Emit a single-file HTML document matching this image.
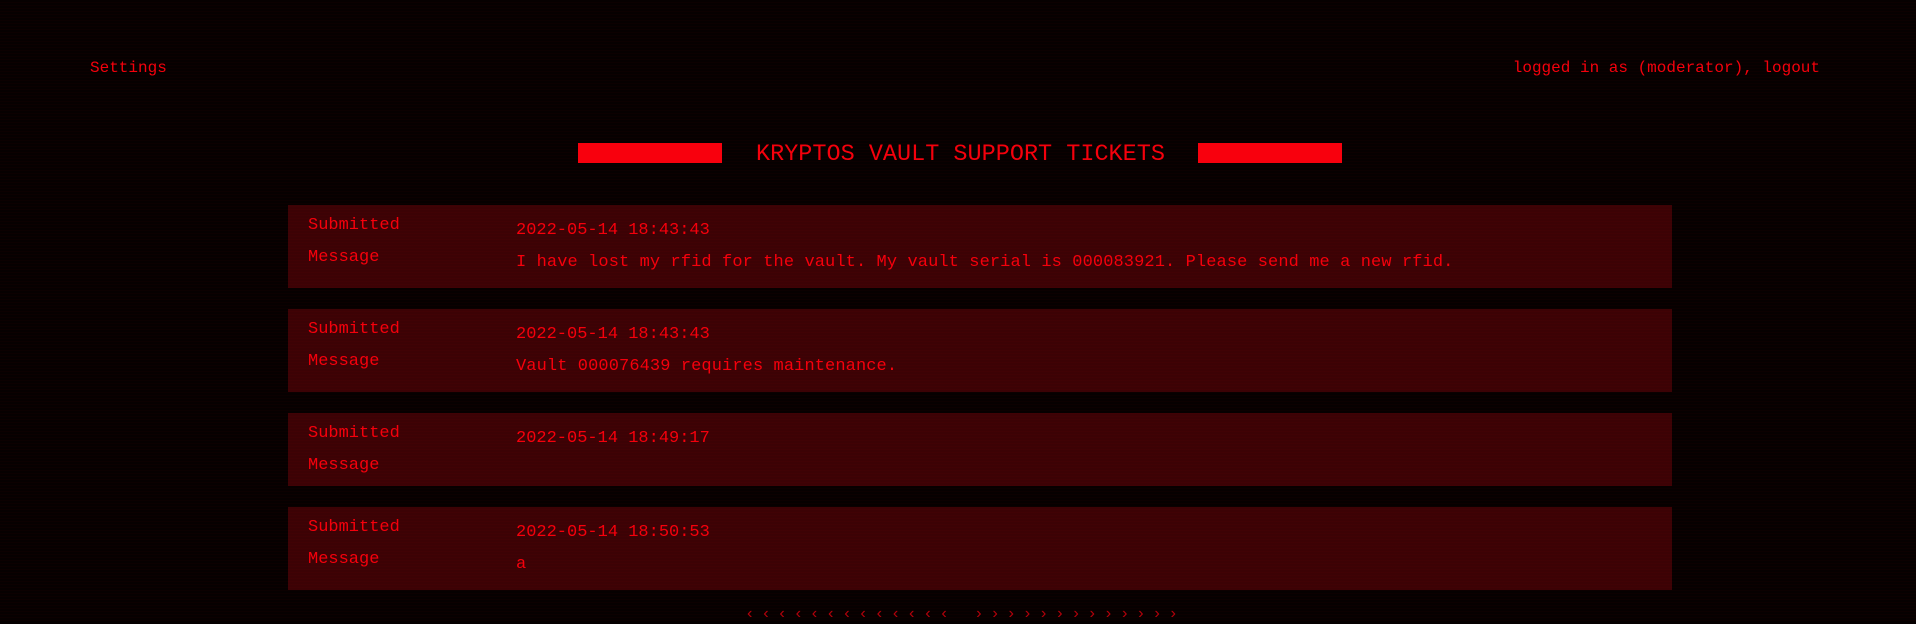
<!DOCTYPE html>
<html><head><style>
body{margin:0;width:1916px;height:621px;overflow:hidden;background:#060000;font-family:"Liberation Mono",monospace;color:#f5000c;position:relative}
.scan{position:absolute;inset:0;background:repeating-linear-gradient(#0000 0 2px,rgba(255,0,0,0.025) 2px 3px);pointer-events:none}
.t{position:absolute;white-space:nowrap;font-size:16px;line-height:20px}
.bar{position:absolute;background:#f8000d;height:20px;top:143px;width:144px}
.card{position:absolute;left:288px;width:1384px;background:#3c0205}
.card .l{position:absolute;left:20px;font-size:17px;line-height:20px}
.card .v{position:absolute;left:228px;font-size:17px;line-height:20px;white-space:nowrap}
.m{letter-spacing:0.1px}
</style></head><body>
<div class="t" style="left:90px;top:58px">Settings</div>
<div class="t" style="right:96px;top:58px">logged in as (moderator), logout</div>
<div class="bar" style="left:578px"></div>
<div class="bar" style="left:1198px"></div>
<div class="t" style="left:756px;top:141px;font-size:23.5px;line-height:28px">KRYPTOS VAULT SUPPORT TICKETS</div>

<div class="card" style="top:205px;height:83px">
<div class="l" style="top:11px">Submitted</div><div class="l" style="top:43px">Message</div>
<div class="v" style="top:16px">2022-05-14 18:43:43</div><div class="v m" style="top:48px">I have lost my rfid for the vault. My vault serial is 000083921. Please send me a new rfid.</div></div>
<div class="card" style="top:309px;height:83px">
<div class="l" style="top:11px">Submitted</div><div class="l" style="top:43px">Message</div>
<div class="v" style="top:16px">2022-05-14 18:43:43</div><div class="v m" style="top:48px">Vault 000076439 requires maintenance.</div></div>
<div class="card" style="top:413px;height:73px">
<div class="l" style="top:11px">Submitted</div><div class="l" style="top:43px">Message</div>
<div class="v" style="top:16px">2022-05-14 18:49:17</div></div>
<div class="card" style="top:507px;height:83px">
<div class="l" style="top:11px">Submitted</div><div class="l" style="top:43px">Message</div>
<div class="v" style="top:16px">2022-05-14 18:50:53</div><div class="v m" style="top:48px">a</div></div>

<div class="t" style="left:745px;top:604px;color:#b0000a;font-size:16px;letter-spacing:6.6px">‹‹‹‹‹‹‹‹‹‹‹‹‹</div>
<div class="t" style="left:974px;top:604px;color:#b0000a;font-size:16px;letter-spacing:6.6px">›››››››››››››</div>
<div class="scan"></div>
</body></html>
